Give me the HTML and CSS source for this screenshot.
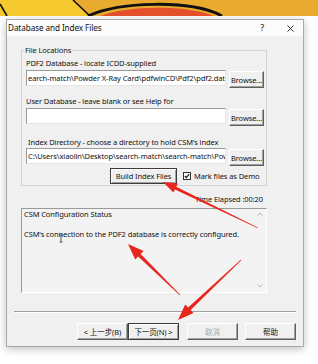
FILE: index.html
```html
<!DOCTYPE html>
<html lang="en">
<head>
    <meta charset="UTF-8">
    <meta name="viewport" content="width=device-width, initial-scale=1.0">
    <title>Database and Index Files</title>
    <link rel="stylesheet" href="styles.css">
</head>
<body>
<div class="screen">

    <!-- Desktop wallpaper strip -->
    <svg class="banner" viewBox="0 0 318 16" width="318" height="16">
        <rect width="318" height="16" fill="#e9aa30"/>
        <polygon points="0,0 74,0 90,16 0,16" fill="#f6c92f"/>
        <path d="M0 4 L7 16" stroke="#111" stroke-width="1.6"/>
        <path d="M73 0 L90 16" stroke="#111" stroke-width="1.6"/>
        <path d="M100 16 C125 6 185 4 214 16 Z" fill="#e4502c"/>
        <path d="M88 16 C118 2 190 -1 222 16" fill="none" stroke="#111" stroke-width="3"/>
    </svg>

    <!-- Dialog window -->
    <div class="dialog">
        <div class="title-bar">
            <span class="title">Database and Index Files</span>
            <span class="title-help">?</span>
            <svg class="title-close" viewBox="0 0 7 7" width="7" height="7">
                <path d="M0.5 0.5 L6.5 6.5 M6.5 0.5 L0.5 6.5" stroke="#222" stroke-width="0.9"/>
            </svg>
        </div>

        <div class="dialog-body">
            <fieldset class="group">
                <legend>File Locations</legend>

                <div class="field-label first">PDF2 Database - locate ICDD-supplied</div>
                <div class="field-row">
                    <div class="field">earch-match\Powder X-Ray Card\pdfwinCD\Pdf2\pdf2.dat</div>
                    <button class="btn browse">Browse...</button>
                </div>

                <div class="field-label">User Database - leave blank or see Help for</div>
                <div class="field-row">
                    <div class="field"></div>
                    <button class="btn browse">Browse...</button>
                </div>

                <div class="field-label indent">Index Directory - choose a directory to hold CSM's index</div>
                <div class="field-row tight">
                    <div class="field">C:\Users\xiaolin\Desktop\search-match\search-match\Pow</div>
                    <button class="btn browse">Browse...</button>
                </div>

                <div class="build-row">
                    <button class="btn build">Build Index Files</button>
                    <label class="demo">
                        <svg class="check" viewBox="0 0 8 8" width="8" height="8">
                            <rect x="0.5" y="0.5" width="7" height="7" fill="#fff" stroke="#333"/>
                            <path d="M1.8 4 L3.3 5.6 L6.2 2.2" fill="none" stroke="#111" stroke-width="1.1"/>
                        </svg>
                        Mark files as Demo
                    </label>
                </div>
            </fieldset>

            <div class="elapsed">Time Elapsed :00:20</div>

            <div class="status">
                <div class="status-text">
                    CSM Configuration Status<br><br>
                    CSM's connection to the PDF2 database is correctly configured.
                </div>
                <div class="scroll">
                    <svg viewBox="0 0 6 4" width="6" height="4"><path d="M0.5 3.5 L3 1 L5.5 3.5" fill="none" stroke="#b4b4b4"/></svg>
                    <svg viewBox="0 0 6 4" width="6" height="4"><path d="M0.5 0.5 L3 3 L5.5 0.5" fill="none" stroke="#b4b4b4"/></svg>
                </div>
            </div>

            <div class="separator"></div>

            <div class="wizard-buttons">
                <button class="btn wizard">&lt; 上一步(B)</button>
                <button class="btn wizard default">下一页(N) &gt;</button>
                <button class="btn wizard cancel" disabled>取消</button>
                <button class="btn wizard help">帮助</button>
            </div>
        </div>
    </div>

    <!-- Annotation arrows drawn over the screenshot -->
    <svg class="arrows" viewBox="0 0 318 364" width="318" height="364">
        <polygon fill="#e8261e" points="258.17,227.64 176.25,186.75 177.78,183.6 163,182 173.42,192.6 174.95,189.45 257.83,228.36"/>
        <polygon fill="#e8261e" points="180.28,294.71 140.66,253.91 143.6,250.92 128,244 135.2,259.48 138.14,256.49 179.72,295.29"/>
        <polygon fill="#e8261e" points="240.72,259.71 188.14,307.52 185.19,304.52 178,320 193.61,313.08 190.66,310.08 241.28,260.29"/>
        <path d="M59.5 235 L62.5 235 M61 235 L61 242 M59.5 242 L62.5 242" stroke="#333" stroke-width="0.8"/>
    </svg>
</div>
</body>
</html>
```

FILE: styles.css
```css
/* Global */
body {
    margin: 0;
    font-family: "Noto Sans", "Noto Sans CJK SC", sans-serif;
    font-size: 7.5px;
    letter-spacing: -0.1px;
    line-height: 10px;
    color: #111;
    background: #fff;
}

.screen {
    position: relative;
    width: 318px;
    height: 364px;
    overflow: hidden;
    background: #fff;
}

.banner {
    display: block;
}

/* Dialog window */
.dialog {
    box-sizing: border-box;
    width: 298px;
    height: 328px;
    margin: 3px 0 0 6px;
    border: 1px solid #a9a9a9;
    background: #f0f0f0;
    box-shadow: 0 2px 8px rgba(0, 0, 0, 0.25);
    display: flex;
    flex-direction: column;
}

.title-bar {
    height: 16px;
    background: #fbfbfb;
    display: flex;
    align-items: center;
    padding-left: 1px;
}

.title {
    flex: 1;
    font-size: 8.2px;
}

.title-help {
    font-size: 9px;
    margin-right: 23px;
}

.title-close {
    margin-right: 9px;
}

.dialog-body {
    flex: 1;
    padding-top: 9px;
    display: flex;
    flex-direction: column;
}

/* File Locations group */
.group {
    box-sizing: border-box;
    width: 246px;
    margin: 0 0 0 14px;
    padding: 0 2px 1px 4px;
    border: 1px solid #d3d3d3;
    min-width: 0;
}

.group legend {
    margin-left: -2px;
    padding: 0 1px;
}

.field-label {
    margin-top: 8px;
    white-space: nowrap;
}

.field-label.first {
    margin-top: 3px;
}

.field-label.indent {
    margin-top: 11px;
    padding-left: 2px;
}

.field-row {
    display: flex;
    align-items: flex-start;
    margin-top: 2px;
    gap: 3px;
}

.field-row.tight {
    margin-top: 1px;
}

.field {
    box-sizing: border-box;
    width: 200px;
    height: 16px;
    padding: 2px 1px 0;
    background: #fff;
    border: 1px solid;
    border-color: #9a9a9a #e6e6e6 #e6e6e6 #9a9a9a;
    white-space: nowrap;
    overflow: hidden;
}

/* Buttons */
.btn {
    box-sizing: border-box;
    font: inherit;
    letter-spacing: inherit;
    color: #111;
    background: #f0f0f0;
    border: 1px solid;
    border-color: #fff #5f5f5f #5f5f5f #fff;
    box-shadow: inset -1px -1px #a0a0a0;
    padding: 0;
    height: 17px;
    white-space: nowrap;
}

.btn.browse {
    width: 35px;
    margin-top: 1px;
}

.build-row {
    display: flex;
    align-items: center;
    margin-top: 2px;
    height: 16px;
}

.btn.build {
    width: 67px;
    height: 16px;
    margin-left: 84px;
    border-color: #3c3c3c;
    box-shadow: inset 1px 1px #fff, inset -1px -1px #a0a0a0;
}

.demo {
    display: flex;
    align-items: center;
    gap: 3px;
    margin-left: 6px;
    white-space: nowrap;
}

.elapsed {
    width: 246px;
    margin: 8px 0 0 14px;
    box-sizing: border-box;
    padding-right: 4px;
    text-align: right;
}

/* Status box */
.status {
    box-sizing: border-box;
    width: 246px;
    height: 85px;
    margin: 4px 0 0 14px;
    border: 1px solid;
    border-color: #9a9a9a #fff #fff #9a9a9a;
    background: #f3f3f3;
    display: flex;
}

.status-text {
    flex: 1;
    padding-left: 2px;
}

.scroll {
    width: 12px;
    padding: 3px 0 4px;
    display: flex;
    flex-direction: column;
    justify-content: space-between;
    align-items: center;
}

.separator {
    margin: 18px 7px 0;
    height: 1px;
    background: #a0a0a0;
    border-bottom: 1px solid #fff;
}

.wizard-buttons {
    display: flex;
    justify-content: flex-end;
    margin-top: 10px;
    padding-right: 7px;
}

.btn.wizard {
    width: 51px;
}

.btn.default {
    border-color: #3c3c3c;
    box-shadow: inset 1px 1px #fff, inset -1px -1px #a0a0a0;
}

.btn.cancel {
    margin-left: 8px;
    color: #a8a8a8;
}

.btn.help {
    margin-left: 7px;
}

/* Annotation overlay */
.arrows {
    position: absolute;
    top: 0;
    left: 0;
    pointer-events: none;
}
```
